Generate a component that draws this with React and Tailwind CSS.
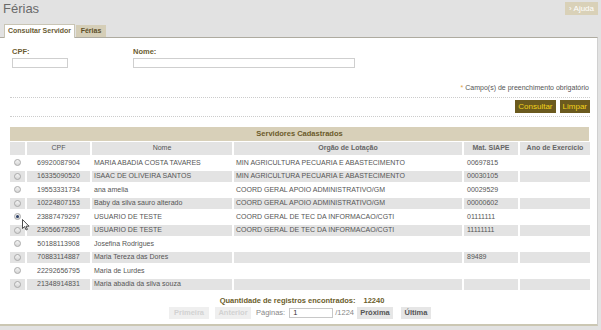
import React from "react";

const rows = [
  ["69920087904", "MARIA ABADIA COSTA TAVARES", "MIN AGRICULTURA PECUARIA E ABASTECIMENTO", "00697815"],
  ["16335090520", "ISAAC DE OLIVEIRA SANTOS", "MIN AGRICULTURA PECUARIA E ABASTECIMENTO", "00030105"],
  ["19553331734", "ana amelia", "COORD GERAL APOIO ADMINISTRATIVO/GM", "00029529"],
  ["10224807153", "Baby da silva sauro alterado", "COORD GERAL APOIO ADMINISTRATIVO/GM", "00000602"],
  ["23887479297", "USUARIO DE TESTE", "COORD GERAL DE TEC DA INFORMACAO/CGTI", "01111111"],
  ["23056672805", "USUARIO DE TESTE", "COORD GERAL DE TEC DA INFORMACAO/CGTI", "11111111"],
  ["50188113908", "Josefina Rodrigues", "", ""],
  ["70883114887", "Maria Tereza das Dores", "", "89489"],
  ["22292656795", "Maria de Lurdes", "", ""],
  ["21348914831", "Maria abadia da silva souza", "", ""],
];

function Radio({ checked }) {
  return (
    <span className="flex h-[7px] w-[7px] items-center justify-center rounded-full border border-[#a9a9a9] bg-gradient-to-b from-[#f4f4f4] to-[#d6d6d6]">
      {checked && <span className="h-[3px] w-[3px] rounded-full bg-[#2b3f66]" />}
    </span>
  );
}

export default function App() {
  return (
    <div className="relative flex h-[330px] w-[601px] flex-col overflow-hidden bg-[#e2e2e2] font-['Liberation_Sans',Arial,sans-serif]">
      {/* top bar */}
      <div className="flex h-[24px] items-start justify-between">
        <div className="pl-[3px] pt-[1px] text-[13px] leading-[16px] text-[#6a6a6a]">Férias</div>
        <div className="mr-[3px] mt-[2px] flex h-[13px] items-center bg-[#d9d1b8] px-[4px] text-[8px] text-white">
          › Ajuda
        </div>
      </div>

      {/* tabs */}
      <div className="flex h-[13px] items-end gap-[1px] pl-[4px]">
        <div className="relative z-10 -mb-[1px] flex h-[14px] items-center justify-center whitespace-nowrap border border-b-0 border-[#c9c5b5] bg-white px-[3px] text-[7px] font-bold text-[#6a5c35]">
          Consultar Servidor
        </div>
        <div className="flex h-[12px] w-[30px] items-center justify-center bg-[#d5ceb7] text-[7px] font-bold text-[#5d4e28]">
          Férias
        </div>
      </div>

      {/* panel */}
      <div className="mr-[3px] flex h-[289px] flex-col border-t border-r border-b-2 border-t-[#aeaba0] border-r-[#d0d0d0] border-b-[#cbc7b3] bg-white pl-[10px] pr-[7px]">
        {/* fields */}
        <div className="mt-[9px] flex gap-[65px] pl-[2px]">
          <div className="flex flex-col">
            <span className="text-[7.5px] font-bold leading-[9px] text-[#6b5d30]">CPF:</span>
            <div className="mt-[2px] h-[10px] w-[56px] border border-[#cfcfcf] bg-white" />
          </div>
          <div className="flex flex-col">
            <span className="text-[7.5px] font-bold leading-[9px] text-[#6b5d30]">Nome:</span>
            <div className="mt-[2px] h-[10px] w-[222px] border border-[#cfcfcf] bg-white" />
          </div>
        </div>

        <div className="mt-[15px] flex justify-end pr-[1px] text-[7px] leading-[9px] text-[#555]">
          <span className="mr-[2px] text-[#e0a040]">*</span>Campo(s) de preenchimento obrigatório
        </div>

        <div className="mt-[5px] border-t border-dotted border-[#cccccc]" />

        <div className="mt-[2px] flex justify-end gap-[4px]">
          <div className="flex h-[13px] items-center bg-[#6b5a1e] px-[3px] text-[8px] text-[#f2d21a]">Consultar</div>
          <div className="flex h-[13px] items-center bg-[#6b5a1e] px-[3px] text-[8px] text-[#f2d21a]">Limpar</div>
        </div>

        <div className="mt-[3px] border-t border-dotted border-[#cccccc]" />

        {/* table */}
        <div className="mr-[1px] mt-[10px] flex h-[14px] items-center justify-center bg-[#d8d0b9] text-[7.5px] font-bold text-[#6b5a2a]">
          Servidores Cadastrados
        </div>
        <div className="mt-[1px] grid grid-cols-[15px_63px_140px_228px_54px_70px] gap-[2px] text-[7px] text-[#555]">
          <div className="h-[13px] bg-[#e3e3e3]" />
          <div className="flex h-[13px] items-center justify-center bg-[#e3e3e3]">CPF</div>
          <div className="flex h-[13px] items-center justify-center bg-[#e3e3e3]">Nome</div>
          <div className="flex h-[13px] items-center justify-center bg-[#e3e3e3] font-bold text-[#666]">Orgão de Lotação</div>
          <div className="flex h-[13px] items-center justify-center bg-[#e3e3e3] font-bold text-[#666]">Mat. SIAPE</div>
          <div className="flex h-[13px] items-center justify-center bg-[#e3e3e3] font-bold text-[#666]">Ano de Exercício</div>
          {rows.map((r, i) => {
            const bg = i % 2 === 1 ? "bg-[#e3e3e3]" : "bg-white";
            return (
              <React.Fragment key={i}>
                <div className={`flex h-[11.5px] items-center justify-center ${bg}`}>
                  <Radio checked={i === 4} />
                </div>
                <div className={`flex h-[11.5px] items-center justify-center ${bg}`}>{r[0]}</div>
                <div className={`flex h-[11.5px] items-center pl-[2px] ${bg}`}>{r[1]}</div>
                <div className={`flex h-[11.5px] items-center pl-[2px] ${bg}`}>{r[2]}</div>
                <div className={`flex h-[11.5px] items-center pl-[3px] ${bg}`}>{r[3]}</div>
                <div className={`h-[11.5px] ${bg}`} />
              </React.Fragment>
            );
          })}
        </div>

        {/* footer */}
        <div className="mt-[6px] flex justify-center gap-[8px] text-[7.5px] font-bold leading-[9px] text-[#6b5d2b]">
          <span className="ml-[4px]">Quantidade de registros encontrados:</span>
          <span>12240</span>
        </div>
        <div className="mt-[2px] flex items-center justify-center text-[7.5px]">
          <div className="flex h-[12px] w-[40px] items-center justify-center bg-[#efefef] font-bold text-[#d2d2d2]">Primeira</div>
          <div className="ml-[6px] flex h-[12px] w-[36px] items-center justify-center bg-[#efefef] font-bold text-[#d2d2d2]">Anterior</div>
          <span className="ml-[5px] text-[#888]">Páginas:</span>
          <div className="ml-[4px] flex h-[10px] w-[44px] items-center border border-[#c8c8c8] bg-white pl-[3px] text-[7.5px] text-[#333]">1</div>
          <span className="ml-[2px] text-[#888]">/1224</span>
          <div className="ml-[3px] flex h-[12px] w-[36px] items-center justify-center bg-[#e6e6e6] font-bold text-[#555]">Próxima</div>
          <div className="ml-[8px] flex h-[12px] w-[30px] items-center justify-center bg-[#e6e6e6] font-bold text-[#555]">Última</div>
        </div>
      </div>

      {/* mouse cursor */}
      <svg className="absolute left-[22px] top-[219px]" width="8" height="12" viewBox="0 0 8 12">
        <path d="M0.5 0.5 L0.5 9.5 L2.6 7.6 L4.1 11 L5.4 10.4 L4 7.2 L7 7.2 Z" fill="white" stroke="#222" strokeWidth="0.8" strokeLinejoin="round" />
      </svg>
    </div>
  );
}
